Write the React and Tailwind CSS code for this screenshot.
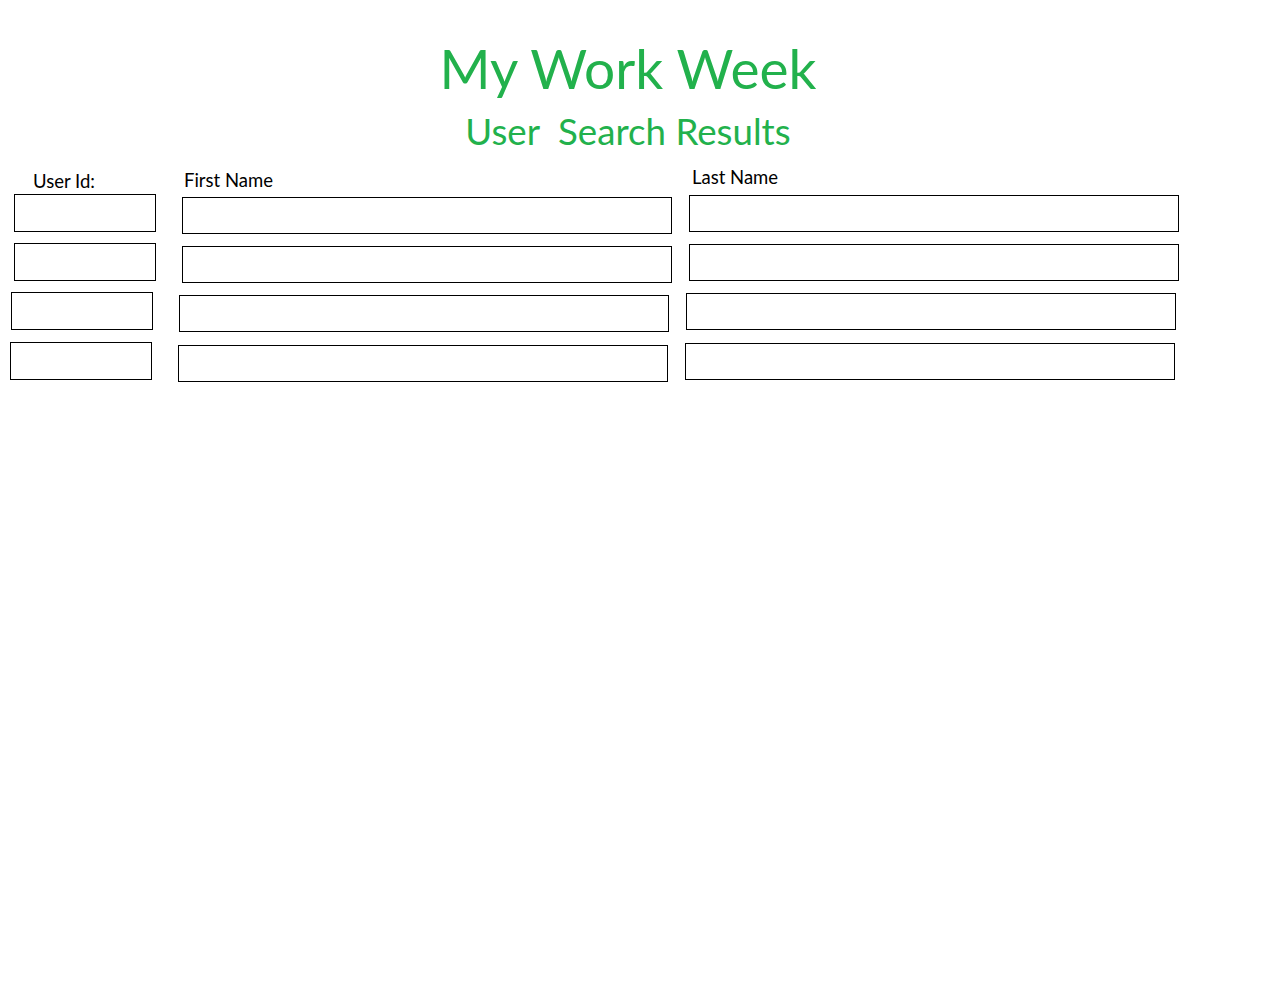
export default function App() {
  const rows = [
    { shift: 0, h: "h-[49px]" },
    { shift: 0, h: "h-[49px]" },
    { shift: 3, h: "h-[50px]" },
    { shift: 4, h: "h-[50px]" },
  ];
  const shiftCls = ["ml-[14px]", "ml-[14px]", "ml-[11px]", "ml-[10px]"];

  return (
    <div className="min-h-screen bg-white text-black" style={{ fontFamily: "Lato, 'Open Sans', sans-serif" }}>
      {/* header */}
      <div className="flex flex-col items-center pr-[22px] pt-[35px]">
        <h1 className="text-[55px] leading-[66px] text-[#22b14c]">My Work Week</h1>
        <h2 className="mt-[8px] whitespace-pre text-[36.7px] leading-[44px] text-[#22b14c]">User  Search Results</h2>
      </div>

      {/* column labels */}
      <div className="mt-[13px] flex h-[28px] items-start text-[18.5px] leading-[22px]">
        <span className="ml-[33px] mt-[4px] w-[151px]">User Id:</span>
        <span className="mt-[3px] w-[508px]">First Name</span>
        <span className="mt-[0px]">Last Name</span>
      </div>

      {/* result rows */}
      <div className="flex flex-col">
        {rows.map((r, i) => (
          <div key={i} className={`flex items-start ${r.h} ${shiftCls[i]}`}>
            <input className="h-[38px] w-[142px] border border-black outline-none" />
            <input className="ml-[26px] mt-[3px] h-[37px] w-[490px] border border-black outline-none" />
            <input className="ml-[17px] mt-[1px] h-[37px] w-[490px] border border-black outline-none" />
          </div>
        ))}
      </div>
    </div>
  );
}
